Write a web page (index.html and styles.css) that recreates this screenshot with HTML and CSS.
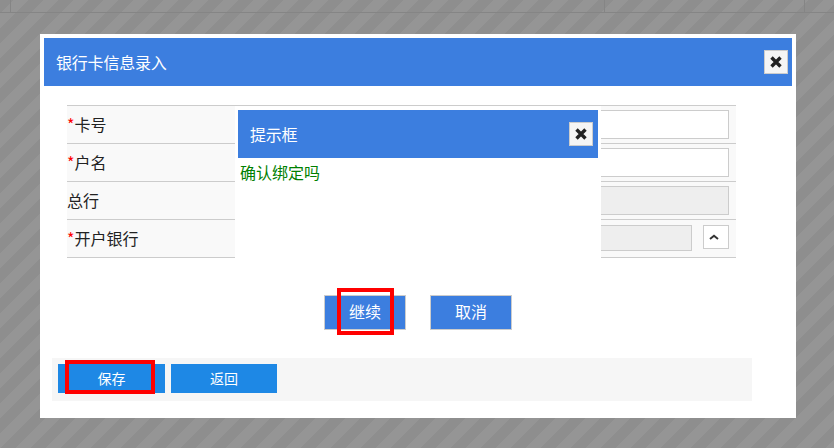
FILE: index.html
```html
<!DOCTYPE html>
<html lang="zh-CN">
<head>
<meta charset="utf-8">
<title>银行卡信息录入</title>
<link rel="stylesheet" href="styles.css">
</head>
<body>
<div class="bg-lines"><i class="v1"></i><i class="v2"></i><i class="v3"></i></div>
<div class="dialog">
  <div class="head">
    <span>银行卡信息录入</span>
    <button class="close" aria-label="关闭"><svg viewBox="0 0 14 14" width="14" height="14"><path class="x" d="M2.500 2.500 11.500 11.500M11.500 2.500 2.500 11.500"/></svg></button>
  </div>
  <div class="form">
    <div class="row"><div class="label"><em>*</em>卡号</div><div class="value"><div class="input"></div></div></div>
    <div class="row"><div class="label"><em>*</em>户名</div><div class="value"><div class="input"></div></div></div>
    <div class="row"><div class="label">总行</div><div class="value"><div class="input off"></div></div></div>
    <div class="row"><div class="label"><em>*</em>开户银行</div><div class="value split"><div class="input off short"></div><button class="up" aria-label="展开"><svg viewBox="0 0 10 6" width="10" height="6"><path class="chev" d="M1 5 5 1.800 9 5"/></svg></button></div></div>
  </div>
  <div class="foot">
    <button class="fbtn first">保存</button>
    <button class="fbtn">返回</button>
  </div>
</div>
<div class="popup">
  <div class="head small">
    <span>提示框</span>
    <button class="close" aria-label="关闭"><svg viewBox="0 0 14 14" width="14" height="14"><path class="x" d="M2.500 2.500 11.500 11.500M11.500 2.500 2.500 11.500"/></svg></button>
  </div>
  <p class="msg">确认绑定吗</p>
  <div class="actions">
    <button class="pbtn">继续</button>
    <button class="pbtn">取消</button>
  </div>
</div>
<div class="mark mark-go"></div>
<div class="mark mark-save"></div>
</body>
</html>
```
FILE: styles.css
```css
* { box-sizing: border-box; }
html, body { margin: 0; height: 100%; }
body {
  position: relative;
  width: 834px;
  height: 448px;
  overflow: hidden;
  padding: 34px 38px 0 40px;
  font-family: "Noto Sans CJK SC", "Liberation Sans", sans-serif;
  font-size: 16px;
  color: #222;
  background: repeating-linear-gradient(135deg, #8e8e8e 0, #8e8e8e 9.550px, #959595 9.550px, #959595 20.150px, #8e8e8e 20.150px, #8e8e8e 21.210px);
}
.bg-lines {
  position: absolute;
  left: 0;
  top: 0;
  width: 834px;
  height: 13px;
  border-bottom: 1px solid #858585;
}
.bg-lines i { position: absolute; top: 0; width: 1px; height: 12px; background: #858585; }
.bg-lines .v1 { left: 10px; }
.bg-lines .v2 { left: 604px; }
.bg-lines .v3 { left: 804px; }
.dialog {
  position: relative;
  width: 756px;
  height: 384px;
  padding: 4px;
  background: #fff;
}
.head {
  display: flex;
  align-items: center;
  justify-content: space-between;
  height: 48px;
  padding: 0 4px 0 12px;
  background: #3c7edf;
  color: #fff;
  font-size: 16px;
  line-height: 24px;
  letter-spacing: -0.200px;
}
.head.small { padding-right: 5px; }
.close {
  display: flex;
  align-items: center;
  justify-content: center;
  width: 24px;
  height: 24px;
  padding: 0;
  border: 1px solid #ccc;
  background: #f5f5f5;
}
.x { fill: none; stroke: #222; stroke-width: 3.400; }
.form {
  width: 669px;
  margin: 19px 0 0 23px;
  border-top: 1px solid #ccc;
}
.row {
  display: flex;
  height: 38px;
  border-bottom: 1px solid #ccc;
  background: #f9f9f9;
}
.label {
  width: 168px;
  line-height: 37px;
  font-size: 16px;
}
.label em { font-style: normal; color: #f00; }
.value {
  flex: 1;
  display: flex;
  padding: 4px 7px 4px 0;
}
.value.split { justify-content: space-between; padding-top: 5px; }
.input {
  flex: 1;
  height: 29px;
  border: 1px solid #ccc;
  background: #fff;
}
.input.off { background: #eee; }
.input.short { flex: none; width: 457px; height: 26px; }
.up {
  display: flex;
  align-items: center;
  justify-content: center;
  width: 26px;
  height: 24px;
  padding: 0 4px 0 0;
  border: 1px solid #ccc;
  background: #fff;
}
.chev { fill: none; stroke: #333; stroke-width: 2; }
.foot {
  display: flex;
  gap: 6px;
  width: 700px;
  height: 43px;
  margin: 100px 0 0 8px;
  padding: 6px;
  background: #f6f6f6;
}
.fbtn {
  width: 106px;
  height: 29px;
  padding: 0 0 2px;
  border: 0;
  background: #1e88e5;
  color: #fff;
  font: 14px/24px "Noto Sans CJK SC", sans-serif;
}
.fbtn.first { width: 107px; }
.popup {
  position: absolute;
  left: 235px;
  top: 106px;
  width: 366px;
  height: 240px;
  padding: 4px 3px 0;
  background: #fff;
}
.msg {
  margin: 3px 0 0 2px;
  line-height: 22px;
  font-size: 16px;
  color: #008000;
}
.actions {
  display: flex;
  gap: 24px;
  margin: 112px 0 0 86px;
}
.pbtn {
  width: 82px;
  height: 35px;
  padding: 0 0 2px;
  border: 1px solid #ccc;
  background: #3c7edf;
  color: #fff;
  font: 16px/31px "Noto Sans CJK SC", sans-serif;
}
.mark {
  position: absolute;
  border: 4px solid #f00;
}
.mark-go { left: 337px; top: 288px; width: 57px; height: 47px; }
.mark-save { left: 65px; top: 360px; width: 90px; height: 34px; }
```
